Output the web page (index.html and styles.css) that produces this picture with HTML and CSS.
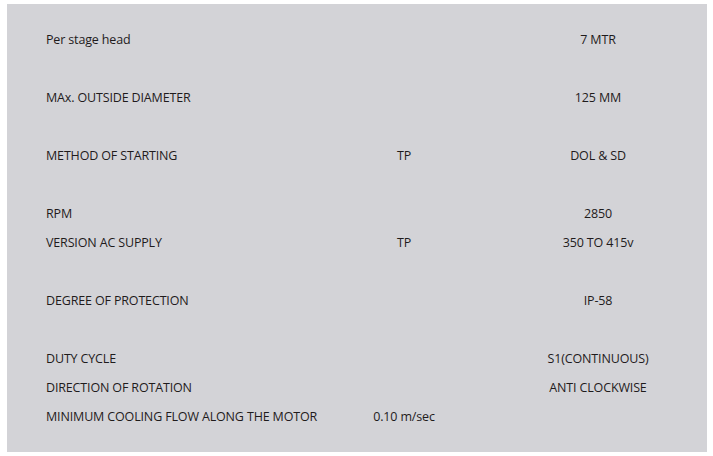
FILE: index.html
```html
<!DOCTYPE html>
<html>
<head>
<meta charset="utf-8">
<link rel="stylesheet" href="styles.css">
</head>
<body>
<div class="panel">
  <div class="spec">
    <div class="label">Per stage head</div><div class="mid"></div><div class="value">7 MTR</div>
    <div class="gap"></div>
    <div class="label">MAx. OUTSIDE DIAMETER</div><div class="mid"></div><div class="value">125 MM</div>
    <div class="gap"></div>
    <div class="label">METHOD OF STARTING</div><div class="mid">TP</div><div class="value">DOL &amp; SD</div>
    <div class="gap"></div>
    <div class="label">RPM</div><div class="mid"></div><div class="value">2850</div>
    <div class="label">VERSION AC SUPPLY</div><div class="mid">TP</div><div class="value">350 TO 415v</div>
    <div class="gap"></div>
    <div class="label">DEGREE OF PROTECTION</div><div class="mid"></div><div class="value">IP-58</div>
    <div class="gap"></div>
    <div class="label">DUTY CYCLE</div><div class="mid"></div><div class="value">S1(CONTINUOUS)</div>
    <div class="label">DIRECTION OF ROTATION</div><div class="mid"></div><div class="value">ANTI CLOCKWISE</div>
    <div class="label">MINIMUM COOLING FLOW ALONG THE MOTOR</div><div class="mid">0.10 m/sec</div><div class="value"></div>
  </div>
</div>
</body>
</html>
```
FILE: styles.css
```css
html, body {
  margin: 0;
  padding: 0;
  background: #ffffff;
}
body {
  padding: 4px 6px 4px 7px;
  font-family: "Open Sans", "Liberation Sans", Arial, sans-serif;
  font-size: 12.5px;
  letter-spacing: -0.15px;
  color: #1f1b1c;
}
.panel {
  width: 700px;
  height: 448px;
  box-sizing: border-box;
  background: #d3d3d7;
  padding: 21px 9px 21px 39px;
}
.spec {
  display: grid;
  grid-template-columns: 294px 128px 1fr;
  grid-auto-rows: 29px;
  align-items: center;
}
.spec > div { white-space: nowrap; }
.gap { grid-column: 1 / -1; }
.mid { text-align: center; }
.value { text-align: center; grid-column: 3; padding-left: 30px; }
```
